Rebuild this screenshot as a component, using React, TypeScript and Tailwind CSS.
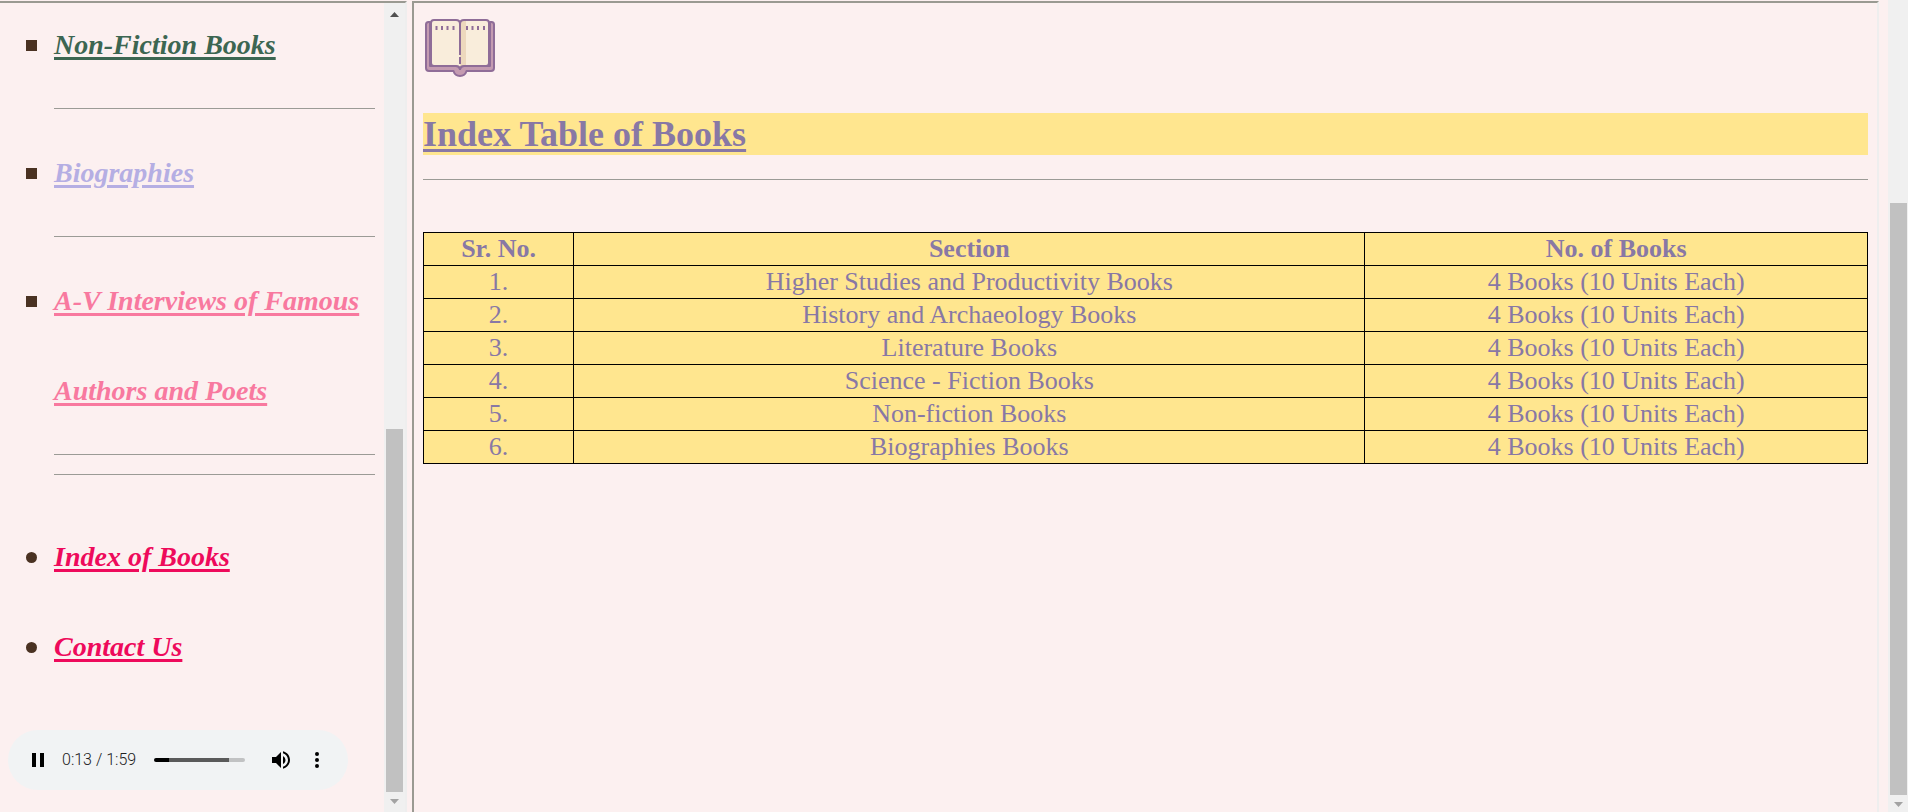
import React from "react";

type NavEntry = {
  label: string;
  href: string;
  color: string;
  rules: number;
};

const sections: NavEntry[] = [
  { label: "Non-Fiction Books", href: "#non-fiction", color: "text-[#3c6652]", rules: 1 },
  { label: "Biographies", href: "#biographies", color: "text-[#b5aee3]", rules: 1 },
  { label: "A-V Interviews of Famous Authors and Poets", href: "#interviews", color: "text-[#f8799f]", rules: 2 },
];

const pages: NavEntry[] = [
  { label: "Index of Books", href: "#index", color: "text-[#ee0a5b]", rules: 0 },
  { label: "Contact Us", href: "#contact", color: "text-[#ee0a5b]", rules: 0 },
];

const rows = [
  "Higher Studies and Productivity Books",
  "History and Archaeology Books",
  "Literature Books",
  "Science - Fiction Books",
  "Non-fiction Books",
  "Biographies Books",
];

function NavList({ entries, marker }: { entries: NavEntry[]; marker: string }) {
  return (
    <ul className="pl-[54px] pr-[9px]">
      {entries.map((e) => (
        <li key={e.href} className="relative">
          <span className={"absolute -left-7 top-10 size-[11px] bg-[#4a3222] " + marker} />
          <a
            href={e.href}
            className={
              "font-['Brush_Script_MT','Liberation_Serif',serif] text-[28px] leading-[90px] font-bold italic underline decoration-[3px] underline-offset-[3px] " +
              e.color
            }
          >
            {e.label}
          </a>
          {Array.from({ length: e.rules }, (_, i) => (
            <hr key={i} className="my-[18px] h-0.5 border-t border-[#9b9b96]" />
          ))}
        </li>
      ))}
    </ul>
  );
}

function AudioPlayer() {
  return (
    <div className="ml-2 flex h-[60px] w-[340px] items-center rounded-full bg-[#f1f3f4] pl-2">
      <button type="button" aria-label="Pause" className="flex size-11 shrink-0 items-center justify-center">
        <svg viewBox="0 0 24 24" className="size-6">
          <path d="M6 5h4v14H6zM14 5h4v14h-4z" />
        </svg>
      </button>
      <span className="w-[94px] shrink-0 pl-0.5 font-['Roboto','Liberation_Sans',sans-serif] text-base font-light text-[#202020]">
        0:13 / 1:59
      </span>
      <input
        type="range"
        aria-label="Playback position"
        min={0}
        max={119}
        defaultValue={13}
        className="h-1 w-[91px] shrink-0 appearance-none rounded-full bg-[linear-gradient(to_right,#000_16%,#5a5a5a_16%,#5a5a5a_82%,#c1c2c3_82%)] [&::-webkit-slider-thumb]:size-0 [&::-webkit-slider-thumb]:appearance-none"
      />
      <button type="button" aria-label="Mute" className="ml-[14px] flex size-11 shrink-0 items-center justify-center">
        <svg viewBox="0 0 24 24" className="size-6">
          <path d="M3 9v6h4l5 5V4L7 9H3zm13.5 3A4.5 4.5 0 0 0 14 7.970v8.050c1.480-.730 2.500-2.250 2.500-4.020zM14 3.230v2.060c2.890.860 5 3.540 5 6.710s-2.110 5.850-5 6.710v2.060c4.010-.910 7-4.490 7-8.770s-2.990-7.860-7-8.770z" />
        </svg>
      </button>
      <button type="button" aria-label="More options" className="flex h-11 w-7 shrink-0 items-center justify-center">
        <svg viewBox="0 0 24 24" className="size-6">
          <path d="M12 8a2 2 0 1 0 0-4 2 2 0 0 0 0 4zm0 2a2 2 0 1 0 0 4 2 2 0 0 0 0-4zm0 6a2 2 0 1 0 0 4 2 2 0 0 0 0-4z" />
        </svg>
      </button>
    </div>
  );
}

function BookIcon() {
  return (
    <svg viewBox="-1 0 72 60" className="h-[60px] w-[72px]" aria-hidden="true">
      <path
        d="M6 3H4.500Q2 3 2 5.500V49Q2 52 5 52H29.500Q31 57 36 57T42.500 52H67Q70 52 70 49V5.500Q70 3 67.500 3H66V47H40Q36.500 47 36 50Q35.500 47 32 47H6Z"
        fill="#c49bb1"
        stroke="#8f6d98"
        strokeWidth="2"
        strokeLinejoin="round"
      />
      <path d="M7 4Q7 1 10 1H32Q36 1 36 5V51Q36 47 32 47H10Q7 47 7 44Z" fill="#f9eddb" />
      <path d="M36 5Q36 1 40 1H62Q65 1 65 4V44Q65 47 62 47H40Q36 47 36 51Z" fill="#f9eddb" />
      <path d="M36 5Q37 1 40 1H42V47H40Q37 47 36 50Z" fill="#edd8bd" />
      <g fill="none" stroke="#8f6d98" strokeWidth="2">
        <path d="M36 36V5Q36 1 32 1H10Q7 1 7 4V44Q7 47 10 47H32Q36 47 36 51Q36 47 40 47H62Q65 47 65 44V4Q65 1 62 1H40Q36 1 36 5" />
        <path d="M36 38V45" />
        <path d="M12.500 7V11M18 7V11M23.500 7V11M29.500 7V11M43 7V11M48.500 7V11M54 7V11M60 7V11" />
      </g>
    </svg>
  );
}

function Arrow({ up, className }: { up?: boolean; className: string }) {
  return (
    <svg viewBox="0 0 9 5" className={"h-[5px] w-[9px] " + className} aria-hidden="true">
      <path d={up ? "M0 5L4.500 0L9 5Z" : "M0 0L4.500 5L9 0Z"} />
    </svg>
  );
}

export default function App() {
  return (
    <div className="flex h-screen overflow-hidden bg-[#fcf0f0] pt-px font-['Liberation_Serif',serif]">
      <nav className="flex w-[407px] shrink-0 border-r-2 border-t-2 border-r-[#eeeeee] border-t-[#9a9a92]">
        <div className="flex min-w-0 flex-1 flex-col justify-end overflow-hidden pb-[22px]">
          <NavList entries={sections} marker="" />
          <div className="h-[18px] shrink-0" />
          <NavList entries={pages} marker="rounded-full" />
          <div className="mt-[38px]">
            <AudioPlayer />
          </div>
        </div>
        <div className="flex w-[21px] shrink-0 flex-col items-center bg-[#f0f0f0] pb-2 pt-[9px]">
          <Arrow up className="shrink-0 fill-[#505050]" />
          <div className="flex-1" />
          <div className="h-[363px] w-[17px] shrink-0 bg-[#c1c1c1]" />
          <Arrow className="mt-[7px] shrink-0 fill-[#a3a3a3]" />
        </div>
      </nav>

      <main className="ml-[5px] min-w-0 flex-1 border-l-2 border-r-2 border-t-2 border-l-[#9a9a92] border-r-[#eeeeee] border-t-[#9a9a92] px-[9px] pt-4">
        <BookIcon />
        <h1 className="mt-[34px] bg-[#ffe68f] text-4xl/[42px] font-bold text-[#8878a5] underline decoration-[3px] underline-offset-[3px]">
          Index Table of Books
        </h1>
        <hr className="mt-6 h-0.5 border-t border-[#9b9b96]" />
        <table className="mt-[51px] w-full table-fixed border-collapse bg-[#ffe68f] text-center text-[26px]/8 text-[#8878a5]">
          <colgroup>
            <col className="w-[10.4%]" />
            <col className="w-[54.8%]" />
            <col />
          </colgroup>
          <thead>
            <tr>
              <th className="border border-black">Sr. No.</th>
              <th className="border border-black">Section</th>
              <th className="border border-black">No. of Books</th>
            </tr>
          </thead>
          <tbody>
            {rows.map((name, i) => (
              <tr key={name}>
                <td className="border border-black">{i + 1}.</td>
                <td className="border border-black">{name}</td>
                <td className="border border-black">4 Books (10 Units Each)</td>
              </tr>
            ))}
          </tbody>
        </table>
      </main>

      <div className="-mt-px ml-[9px] flex w-5 shrink-0 flex-col items-center bg-[#f0f0f0] pb-[5px]">
        <div className="h-[203px] shrink-0" />
        <div className="w-[17px] flex-1 bg-[#c1c1c1]" />
        <Arrow className="mt-[7px] shrink-0 fill-[#a3a3a3]" />
      </div>
    </div>
  );
}
